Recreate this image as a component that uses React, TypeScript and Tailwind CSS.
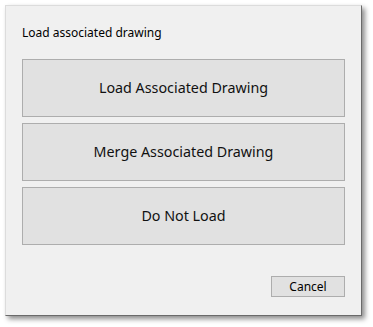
export default function App() {
  const options = ['Load Associated Drawing', 'Merge Associated Drawing', 'Do Not Load'];

  return (
    <div className="w-[373px] h-[327px] bg-white pt-[5px] pl-[5px]" style={{ fontFamily: '"Noto Sans", "Open Sans", sans-serif' }}>
      <div className="w-[357px] h-[311px] bg-[#f0f0f0] border border-[#dcdcdc] border-r-[#6a6a6a] border-b-[#6a6a6a] shadow-[3px_3px_5px_rgba(0,0,0,0.45)] flex flex-col px-[16px]">
        {/* Title */}
        <div className="mt-[17px] h-[20px] text-[12px] leading-[20px] text-black">Load associated drawing</div>

        {/* Choices */}
        <div className="mt-[16px] flex flex-col gap-[6px]">
          {options.map((label) => (
            <button
              key={label}
              className="w-[323px] h-[58px] bg-[#e1e1e1] border border-[#adadad] text-[14.3px] text-[#111] flex items-center justify-center pb-[1px]"
            >
              {label}
            </button>
          ))}
        </div>

        {/* Footer */}
        <div className="mt-auto mb-[18px] flex justify-end">
          <button className="w-[74px] h-[21px] bg-[#e1e1e1] border border-[#adadad] text-[12px] text-black flex items-center justify-center">
            Cancel
          </button>
        </div>
      </div>
    </div>
  );
}
